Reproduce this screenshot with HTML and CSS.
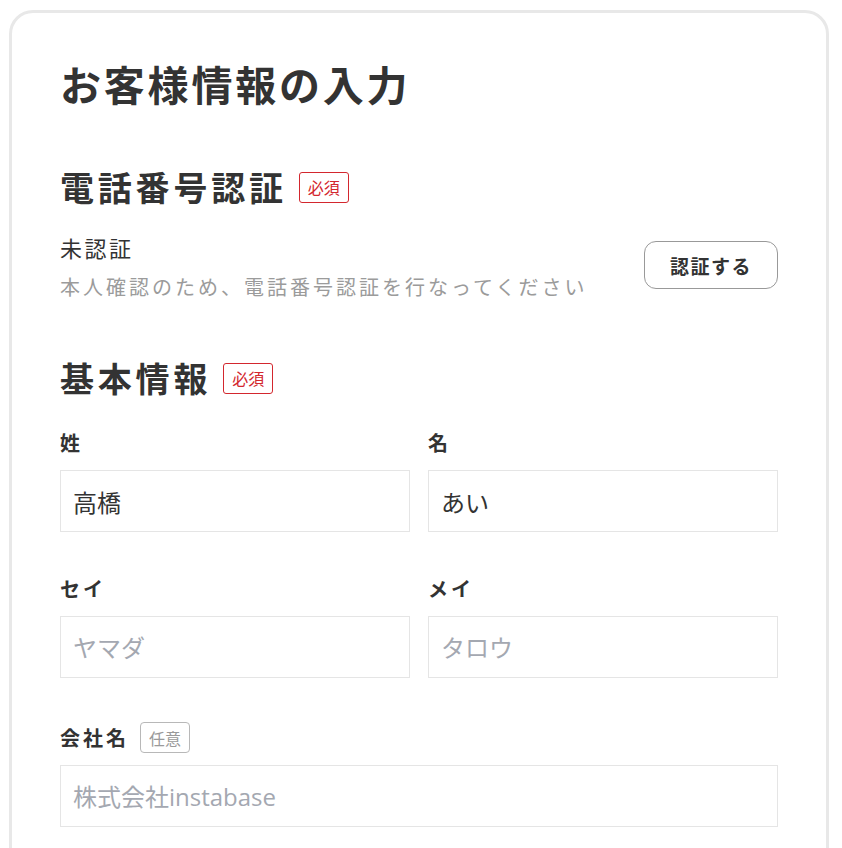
FILE: index.html
```html
<!DOCTYPE html>
<html lang="ja">
<head>
<meta charset="utf-8">
<title>お客様情報の入力</title>
<link rel="stylesheet" href="styles.css">
</head>
<body>
<main class="card">
  <h1 class="title">お客様情報の入力</h1>

  <section class="section section-phone">
    <div class="section-head">
      <h2 class="section-title">電話番号認証</h2>
      <span class="badge badge-required">必須</span>
    </div>
    <div class="verify-row">
      <div class="verify-text">
        <p class="verify-status">未認証</p>
        <p class="verify-note">本人確認のため、電話番号認証を行なってください</p>
      </div>
      <button class="btn-verify" type="button">認証する</button>
    </div>
  </section>

  <section class="section section-basic">
    <div class="section-head">
      <h2 class="section-title">基本情報</h2>
      <span class="badge badge-required">必須</span>
    </div>

    <div class="field-grid">
      <div class="field">
        <label class="field-label">姓</label>
        <input class="field-input" type="text" value="高橋">
      </div>
      <div class="field">
        <label class="field-label">名</label>
        <input class="field-input" type="text" value="あい">
      </div>
      <div class="field">
        <label class="field-label">セイ</label>
        <input class="field-input" type="text" placeholder="ヤマダ">
      </div>
      <div class="field">
        <label class="field-label">メイ</label>
        <input class="field-input" type="text" placeholder="タロウ">
      </div>
      <div class="field field-wide">
        <div class="label-row">
          <label class="field-label">会社名</label>
          <span class="badge badge-optional">任意</span>
        </div>
        <input class="field-input" type="text" placeholder="株式会社instabase">
      </div>
    </div>
  </section>
</main>
</body>
</html>
```

FILE: styles.css
```css
* { box-sizing: border-box; }

html, body {
  margin: 0;
  padding: 0;
  background: #ffffff;
}

body {
  font-family: "Noto Sans CJK JP", "Noto Sans", sans-serif;
  color: #333333;
}

.card {
  margin: 10px 0 0 9px;
  width: 820px;
  min-height: 900px;
  border: 3px solid #e8e8e8;
  border-radius: 24px;
  padding: 45px 48px 40px 48px;
}

.title {
  margin: 0;
  font-size: 41px;
  line-height: 50px;
  font-weight: 700;
  letter-spacing: 2.8px;
  color: #333333;
}

.section-phone { margin-top: 57px; }
.section-basic { margin-top: 54px; }

.section-head {
  display: flex;
  align-items: center;
  gap: 12px;
  height: 44px;
}

.section-title {
  margin: 0;
  font-size: 34px;
  line-height: 44px;
  font-weight: 700;
  letter-spacing: 3.8px;
  color: #333333;
}

.badge {
  display: inline-flex;
  align-items: center;
  justify-content: center;
  height: 31px;
  padding: 0 8px;
  border: 1px solid;
  border-radius: 3px;
  font-size: 16px;
  line-height: 1;
  font-weight: 400;
}

.badge-required {
  border-color: #d3272e;
  color: #d3272e;
}

.badge-optional {
  border-color: #b8b8b8;
  color: #9a9a9a;
  border-radius: 4px;
}

.verify-row {
  display: flex;
  align-items: center;
  justify-content: space-between;
  margin-top: 22px;
}

.verify-text p { margin: 0; }

.verify-status {
  font-size: 22px;
  line-height: 32px;
  letter-spacing: 2.5px;
  color: #333333;
}

.verify-note {
  margin-top: 9px !important;
  font-size: 20px;
  line-height: 30px;
  letter-spacing: 3px;
  color: #9b9b9b;
}

.btn-verify {
  width: 134px;
  height: 48px;
  border: 1px solid #999999;
  border-radius: 12px;
  background: #ffffff;
  font-family: inherit;
  font-size: 19px;
  font-weight: 700;
  letter-spacing: 1.5px;
  color: #333333;
  padding: 0;
  margin-top: -3px;
}

.field-grid {
  display: grid;
  grid-template-columns: 1fr 1fr;
  column-gap: 18px;
  row-gap: 44px;
  margin-top: 30px;
}

.field-wide { grid-column: 1 / 3; }

.field {
  display: flex;
  flex-direction: column;
}

.field-label {
  display: block;
  font-size: 20px;
  line-height: 26px;
  font-weight: 700;
  letter-spacing: 3px;
  color: #333333;
  margin-bottom: 14px;
}

.label-row {
  display: flex;
  align-items: center;
  gap: 11px;
  margin-bottom: 12px;
}

.label-row .field-label { margin-bottom: 0; }

.field-input {
  width: 100%;
  height: 62px;
  border: 1px solid #e5e5e5;
  border-radius: 0;
  padding: 0 12px;
  font-family: "Open Sans", "Noto Sans CJK JP", sans-serif;
  font-size: 24px;
  color: #333333;
  background: #ffffff;
  outline: none;
}

.field-input::placeholder {
  color: #a4a8b1;
}
```
